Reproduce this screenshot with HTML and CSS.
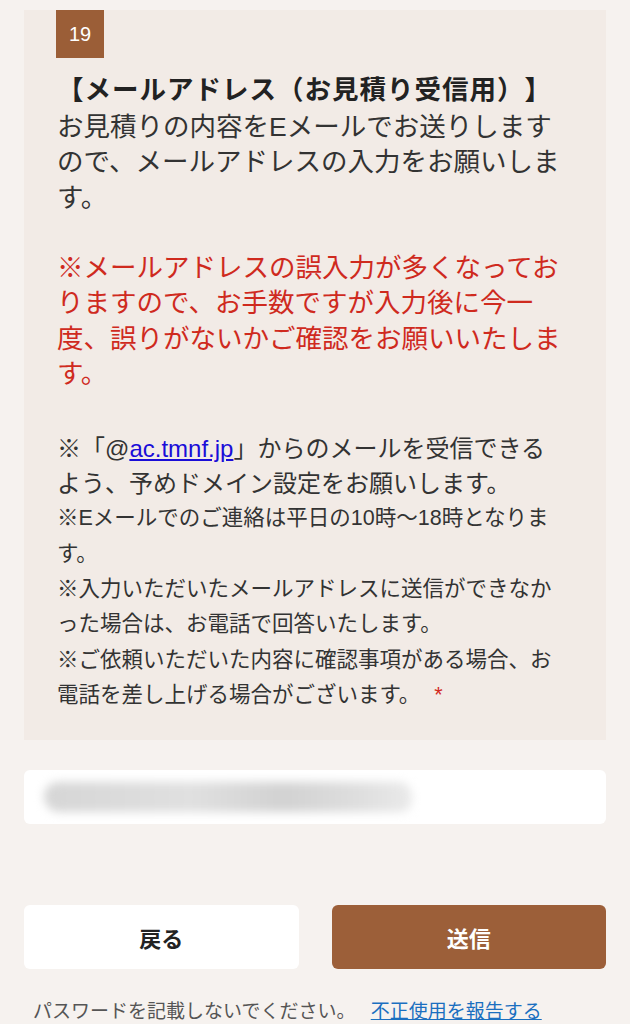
FILE: index.html
```html
<!DOCTYPE html>
<html lang="ja">
<head>
    <meta charset="UTF-8">
    <meta name="viewport" content="width=device-width, initial-scale=1.0">
    <title>お見積り依頼</title>
    <link rel="stylesheet" href="styles.css">
</head>
<body>
    <div class="page">
        <!-- Question 19 -->
        <section class="question">
            <div class="q-num">19</div>
            <h2 class="q-title">【メールアドレス（お見積り受信用）】</h2>
            <div class="q-body">
                <p class="q-text">お見積りの内容をEメールでお送りしますので、メールアドレスの入力をお願いします。</p>
                <p class="q-warn">※メールアドレスの誤入力が多くなっておりますので、お手数ですが入力後に今一度、誤りがないかご確認をお願いいたします。</p>
                <p class="note note-lg">※「@<a href="#">ac.tmnf.jp</a>」からのメールを受信できるよう、予めドメイン設定をお願いします。</p>
                <p class="note">※Eメールでのご連絡は平日の10時〜18時となります。</p>
                <p class="note">※入力いただいたメールアドレスに送信ができなかった場合は、お電話で回答いたします。</p>
                <p class="note">※ご依頼いただいた内容に確認事項がある場合、お電話を差し上げる場合がございます。 <span class="req">*</span></p>
            </div>
        </section>

        <!-- Answer -->
        <div class="answer">
            <div class="answer-blur"></div>
        </div>

        <!-- Buttons -->
        <div class="actions">
            <button class="btn">戻る</button>
            <button class="btn btn-primary">送信</button>
        </div>

        <p class="footer">パスワードを記載しないでください。 <a href="#">不正使用を報告する</a></p>
    </div>
</body>
</html>
```

FILE: styles.css
```css
body {
    margin: 0;
    background-color: #f6f2ef;
    font-family: "Liberation Sans", "Noto Sans CJK JP", sans-serif;
    color: #333;
    text-spacing-trim: space-all;
}

.page {
    padding: 10px 24px 0 24px;
}

/* Question card */
.question {
    background-color: #f2ebe6;
    padding: 0 43px 27px 32px;
}
.q-num {
    width: 48px;
    height: 48px;
    background-color: #9b5e37;
    color: #fff;
    font-size: 20px;
    line-height: 48px;
    text-align: center;
}
.q-title {
    margin: 15px 0 2px 1px;
    font-size: 26.5px;
    line-height: 35px;
    font-weight: bold;
    letter-spacing: 1px;
    color: #222;
}
.q-body {
    width: 506px;
    margin-left: 1px;
}
.q-body p {
    margin: 0;
}
.q-text {
    font-size: 26.5px;
    line-height: 35.3px;
    margin-bottom: 35.3px !important;
}
.q-warn {
    font-size: 26.5px;
    line-height: 35.3px;
    color: #cf2a1e;
    margin-bottom: 38.5px !important;
}
.note {
    font-size: 21.5px;
    line-height: 35.3px;
    color: #333;
}
.note-lg {
    font-size: 24px;
}
.note a {
    color: #1a0dd8;
}
.req {
    color: #d22a1e;
    margin-left: 8px;
}

/* Answer input */
.answer {
    margin-top: 30px;
    height: 54px;
    background-color: #fff;
    border-radius: 6px;
    overflow: hidden;
    display: flex;
    align-items: center;
    padding-left: 20px;
}
.answer-blur {
    width: 368px;
    height: 30px;
    border-radius: 15px 14px 12px 16px;
    background: linear-gradient(90deg, #d6d6d6, #e0e0e0 40%, #d2d2d2 65%, #dedede 85%, #eaeaea);
    filter: blur(5px);
}

/* Buttons */
.actions {
    display: flex;
    gap: 33px;
    margin-top: 81px;
}
.btn {
    flex: 1;
    height: 64px;
    border: none;
    border-radius: 6px;
    background-color: #fff;
    color: #222;
    font-family: "Liberation Sans", "Noto Sans CJK JP", sans-serif;
    font-size: 22px;
    font-weight: bold;
    cursor: pointer;
}
.btn-primary {
    background-color: #9c5f39;
    color: #fff;
}

.footer {
    margin: 29px 0 0 9px;
    font-size: 19px;
    line-height: 28px;
    color: #555;
}
.footer a {
    color: #1a6fc0;
    margin-left: 10px;
}
```
